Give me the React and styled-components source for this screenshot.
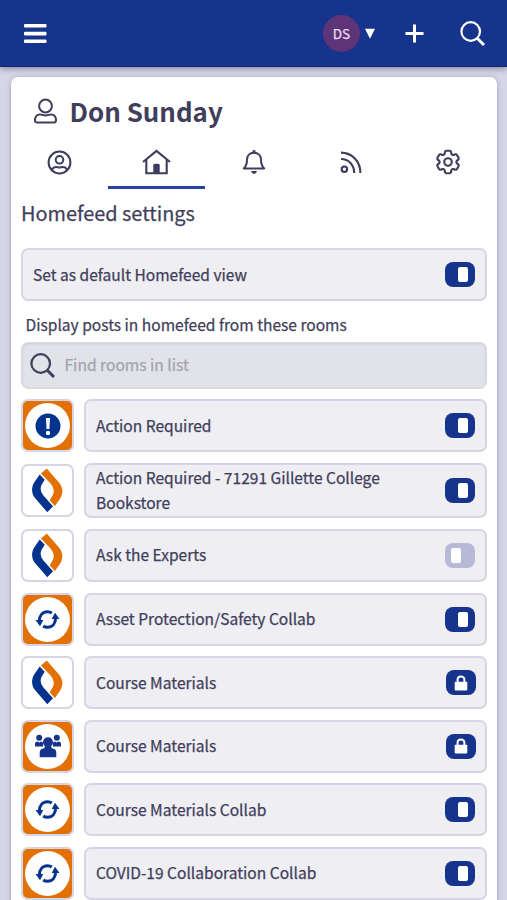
import React, { useState } from "react";
import styled, { createGlobalStyle } from "styled-components";
import { HiOutlineCog6Tooth } from "react-icons/hi2";

const GlobalStyle = createGlobalStyle`
    * {
        box-sizing: border-box;
    }
    body {
        margin: 0;
        background-color: #d5d6e6;
        color: #3f3f5b;
        font-family: "Noto Sans CJK JP", "Noto Sans CJK SC", "Open Sans", sans-serif;
        font-size: 15.55px;
        font-weight: 400;
        -webkit-text-stroke: 0.25px;
    }
`;

const Page = styled.div`
    height: 100vh;
    overflow: hidden;
    display: flex;
    flex-direction: column;
`;

const Header = styled.header`
    flex: none;
    height: 67px;
    padding: 1px 22px 0 24px;
    display: flex;
    align-items: center;
    justify-content: space-between;
    background-color: #17348d;
    border-bottom: 1px solid #14266b;
    box-shadow: 0 2px 6px rgba(50, 50, 90, 0.45);
    z-index: 1;
`;

const IconButton = styled.button`
    display: flex;
    padding: 0;
    border: none;
    background: none;
    color: #fff;
`;

const HeaderRight = styled.div`
    display: flex;
    align-items: center;
`;

const Account = styled(IconButton)`
    align-items: center;
    gap: 5px;
    margin-right: 30px;
`;

const AddButton = styled(IconButton)`
    margin-right: 36px;
`;

const Avatar = styled.span`
    width: 37px;
    height: 37px;
    border-radius: 50%;
    background-color: #5d3477;
    color: #f0dcf4;
    font: 400 13.6px/36px "Noto Sans CJK JP", sans-serif;
    text-align: center;
`;

const Card = styled.main`
    flex: none;
    width: 486px;
    min-height: 900px;
    margin: 10px 0 0 11px;
    background-color: #fff;
    border-radius: 7px;
    box-shadow: 0 1px 5px rgba(70, 70, 120, 0.4);
`;

const Title = styled.h1`
    display: flex;
    align-items: center;
    gap: 13px;
    height: 57px;
    margin: 0;
    padding: 10px 0 0 22.5px;
    font-size: 25.9px;
    font-weight: 700;
    line-height: 44px;
    -webkit-text-stroke: 0;
`;

const Tabs = styled.nav`
    display: grid;
    grid-template-columns: repeat(5, 1fr);
    height: 55px;
`;

const Tab = styled.button`
    display: flex;
    align-items: center;
    justify-content: center;
    padding: 4px 0 0;
    border: none;
    border-bottom: 3px solid ${(props) => (props.$active ? "#2644a0" : "transparent")};
    background: none;
    color: #3d3d5c;
`;

const Content = styled.section`
    padding: 0 10px;
`;

const Heading = styled.h2`
    margin: 0;
    padding-bottom: 11px;
    font-size: 19.9px;
    font-weight: 400;
    line-height: 48px;
`;

const Label = styled.p`
    margin: 0;
    padding: 8px 4.5px 2px;
    line-height: 31px;
`;

const Setting = styled.div`
    flex: 1;
    display: flex;
    align-items: center;
    justify-content: space-between;
    min-height: 53px;
    padding: 0 10.5px 0 10px;
    border: 2px solid #d5d5e6;
    border-radius: 7px;
    background-color: #eeeef3;
    line-height: 25.2px;
`;

const SearchBox = styled.label`
    display: flex;
    align-items: center;
    gap: 9.5px;
    height: 47px;
    padding: 0 8px;
    border: 1px solid #d9d9e4;
    border-radius: 7px;
    background-color: #e2e3e9;
    box-shadow: inset 0 1px 3px rgba(80, 80, 100, 0.15);
`;

const SearchInput = styled.input`
    flex: 1;
    padding: 0 0 3px;
    border: none;
    outline: none;
    background: none;
    font: inherit;
    font-size: 15.6px;
    &::placeholder {
        color: #a2a3ae;
        opacity: 1;
    }
`;

const RoomList = styled.ul`
    display: flex;
    flex-direction: column;
    gap: 10.6px;
    margin: 10.4px 0 0;
    padding: 0;
    list-style: none;
`;

const Room = styled.li`
    display: flex;
    align-items: center;
    gap: 10px;
`;

const RoomName = styled.span`
    max-width: 310px;
    padding-bottom: 1px;
`;

const Thumb = styled.div`
    flex: none;
    display: flex;
    align-items: center;
    justify-content: center;
    width: 53px;
    height: 53px;
    border: 2px solid #d5d5e6;
    border-radius: 7px;
    background-color: ${(props) => (props.$orange ? "#e37002" : "#fff")};
`;

const Disc = styled.div`
    display: flex;
    align-items: center;
    justify-content: center;
    width: 45px;
    height: 45px;
    border-radius: 50%;
    background-color: #fff;
`;

const Toggle = styled.button`
    flex: none;
    display: flex;
    align-items: center;
    justify-content: ${(props) => (props.$on ? "flex-end" : "flex-start")};
    width: 30px;
    height: 25px;
    padding: 0 6.5px 0 6px;
    border: none;
    border-radius: 8px;
    background-color: ${(props) => (props.$on ? "#17348d" : "#b8b8d7")};
    &::after {
        content: "";
        width: 10px;
        height: 15px;
        border-radius: 2px;
        background-color: #fff;
    }
`;

const Locked = styled.span`
    flex: none;
    display: flex;
    align-items: center;
    justify-content: center;
    width: 30px;
    height: 25px;
    margin-right: -1px;
    border-radius: 8px;
    background-color: #17348d;
`;

const GearIcon = styled(HiOutlineCog6Tooth)`
    flex: none;
    width: 30px;
    height: 30px;
    stroke-width: 1.7;
`;

const MenuIcon = () => (
    <svg width="23" height="21" viewBox="0 0 23 21" fill="#fff">
        <rect y="1" width="22.5" height="3.6" rx="1" />
        <rect y="8.8" width="22.5" height="3.6" rx="1" />
        <rect y="16.4" width="22.5" height="3.6" rx="1" />
    </svg>
);

const CaretIcon = () => (
    <svg width="10" height="11" viewBox="0 0 10 11">
        <path d="M0 0.8H10L5 10.8Z" fill="#fff" />
    </svg>
);

const PlusIcon = () => (
    <svg width="19" height="19" viewBox="0 0 19 19">
        <path d="M9.5 0.5V18.5M0.5 9.5H18.5" stroke="#fff" strokeWidth="3" />
    </svg>
);

const SearchIcon = () => (
    <svg width="25" height="25" viewBox="0 0 25 25" fill="none" stroke="currentColor">
        <circle cx="10.7" cy="10.5" r="9.3" strokeWidth="2.2" />
        <path d="M17.2 17.2L24 24" strokeWidth="3" />
    </svg>
);

const UserIcon = () => (
    <svg width="23" height="26" viewBox="0 0 23 26" fill="none" stroke="currentColor" strokeWidth="2">
        <circle cx="11.5" cy="8" r="6.4" />
        <path d="M5.8 16.4C8 16.4 9 17.4 11.5 17.4S15 16.4 17.2 16.4C20.3 16.4 22 19 22 22.2Q22 24.4 19.8 24.4H3.2Q1 24.4 1 22.2C1 19 2.7 16.4 5.8 16.4Z" />
    </svg>
);

const ProfileIcon = () => (
    <svg width="25" height="25" viewBox="0 0 25 25" fill="none" stroke="currentColor" strokeWidth="2">
        <circle cx="12.5" cy="12.5" r="10.9" />
        <circle cx="12.5" cy="9.8" r="3.8" />
        <path d="M4.8 19.8C6 17.6 7.5 16.9 9.2 16.9C10.7 16.9 11 17.5 12.5 17.5S14.3 16.9 15.8 16.9C17.5 16.9 19 17.6 20.2 19.8" />
    </svg>
);

const HomeIcon = () => (
    <svg width="29" height="26" viewBox="0 0 29 26" fill="none" stroke="currentColor" strokeWidth="2.1">
        <path d="M1 13L14.5 1.9L28 13" />
        <path d="M4.3 11V24.3H24.7V11" />
        <path d="M11.3 24.5V16.3Q11.3 14.8 12.8 14.8H16.2Q17.7 14.8 17.7 16.3V24.5Z" fill="currentColor" stroke="none" />
    </svg>
);

const BellIcon = () => (
    <svg width="24" height="26" viewBox="0 0 24 26" fill="none" stroke="currentColor" strokeWidth="2">
        <path d="M1.8 19.4C4 17.4 5 14.6 5 10.8C5 6.6 7.8 3.7 12 3.7S19 6.6 19 10.8C19 14.6 20 17.4 22.2 19.4Z" strokeLinejoin="round" />
        <path d="M12 1.2V4" strokeWidth="2.8" />
        <path d="M9 22.1Q9.6 24.9 12 24.9T15 22.1Z" fill="currentColor" stroke="none" />
    </svg>
);

const FeedIcon = () => (
    <svg width="22" height="24" viewBox="0 0 22 24" fill="none" stroke="currentColor" strokeWidth="2.1">
        <circle cx="4.4" cy="19.2" r="2.7" />
        <path d="M1 2.6C12 2.6 20.4 11.4 20.4 22.9" />
        <path d="M1 9C8.8 9 14.2 14.8 14.2 22.9" />
    </svg>
);

const LockIcon = () => (
    <svg width="14" height="16" viewBox="0 0 14 16">
        <path d="M3.6 7.5V4.6C3.6 0.4 10.4 0.4 10.4 4.6V7.5" fill="none" stroke="#fff" strokeWidth="2" />
        <rect x="0.7" y="6.8" width="12.6" height="8.6" rx="0.8" fill="#fff" />
    </svg>
);

// brand mark: two interlocking pages
const BrandMark = () => (
    <svg width="31" height="45" viewBox="0 0 31 45">
        <path d="M14.8 0.4L9 5.4L18.8 15.8Q23.4 21.4 21 26.6L17.7 32.4L22.9 38L28.2 30.4C31.2 25.6 31.2 20.2 27.4 15Z" fill="#e37002" />
        <path d="M7.7 6.4L12.7 11.8L9.6 16.8Q7 22 11.2 27.2L21 38.3L15.3 44.3L3 30C-0.8 25.2 -0.7 19.4 2.2 14.6Z" fill="#04338e" />
    </svg>
);

const AlertMark = () => (
    <svg width="26" height="26" viewBox="0 0 26 26">
        <circle cx="13" cy="13" r="12.5" fill="#04338e" />
        <path d="M10.9 5H15.1L14.4 16H11.6Z" fill="#fff" />
        <circle cx="13" cy="20" r="2.2" fill="#fff" />
    </svg>
);

const SyncMark = () => (
    <svg width="25" height="21" viewBox="0 0 25 21">
        <g fill="none" stroke="#04338e" strokeWidth="3">
            <path d="M4.4 12C4.4 6.2 7.8 2.7 12.5 2.7C14.2 2.7 15.6 3.1 16.8 4" />
            <path d="M20.6 9C20.6 14.8 17.2 18.3 12.5 18.3C10.8 18.3 9.4 17.9 8.2 17" />
        </g>
        <path d="M0.5 11H8.3L5 17.2ZM16.7 10H24.5L20 3.8Z" fill="#04338e" />
    </svg>
);

const GroupMark = () => (
    <svg width="28" height="24" viewBox="0 0 28 24" fill="#17348d">
        <circle cx="5.2" cy="3.8" r="3" />
        <path d="M1 12.5V10Q1 7.4 3.3 7.4L5.2 8.4L7.1 7.4Q9 7.6 9 9V12.5Z" />
        <circle cx="22.8" cy="3.8" r="3" />
        <path d="M27 12.5V10Q27 7.4 24.7 7.4L22.8 8.4L20.9 7.4Q19 7.6 19 9V12.5Z" />
        <circle cx="14" cy="8.2" r="5" />
        <path d="M5.7 23.3V19Q5.7 14.5 10.2 14.2L11 12H17L17.8 14.2Q22.3 14.5 22.3 19V23.3Z" />
    </svg>
);

const marks = {
    alert: AlertMark,
    sync: SyncMark,
    group: GroupMark,
};

const tabs = [
    { id: "profile", title: "Profile", Icon: ProfileIcon },
    { id: "home", title: "Homefeed", Icon: HomeIcon },
    { id: "notifications", title: "Notifications", Icon: BellIcon },
    { id: "feeds", title: "Feeds", Icon: FeedIcon },
    { id: "settings", title: "Settings", Icon: GearIcon },
];

const roomData = [
    { id: 1, name: "Action Required", mark: "alert", on: true },
    { id: 2, name: "Action Required - 71291 Gillette College Bookstore", mark: "brand", on: true },
    { id: 3, name: "Ask the Experts", mark: "brand", on: false },
    { id: 4, name: "Asset Protection/Safety Collab", mark: "sync", on: true },
    { id: 5, name: "Course Materials", mark: "brand", locked: true },
    { id: 6, name: "Course Materials", mark: "group", locked: true },
    { id: 7, name: "Course Materials Collab", mark: "sync", on: true },
    { id: 8, name: "COVID-19 Collaboration Collab", mark: "sync", on: true },
];

const RoomThumb = ({ mark }) => {
    const Mark = marks[mark];
    if (!Mark) {
        return <Thumb><BrandMark /></Thumb>;
    }
    return (
        <Thumb $orange>
            <Disc><Mark /></Disc>
        </Thumb>
    );
};

const App = () => {
    const [activeTab, setActiveTab] = useState("home");
    const [isDefault, setIsDefault] = useState(true);
    const [rooms, setRooms] = useState(roomData);
    const [query, setQuery] = useState("");

    const toggleRoom = (id) => {
        setRooms(rooms.map((room) => (room.id === id ? { ...room, on: !room.on } : room)));
    };

    const visible = rooms.filter((room) => room.name.toLowerCase().includes(query.toLowerCase()));

    return (
        <Page>
            <GlobalStyle />
            <Header>
                <IconButton aria-label="Menu"><MenuIcon /></IconButton>
                <HeaderRight>
                    <Account aria-label="Account">
                        <Avatar>DS</Avatar>
                        <CaretIcon />
                    </Account>
                    <AddButton aria-label="Add"><PlusIcon /></AddButton>
                    <IconButton aria-label="Search"><SearchIcon /></IconButton>
                </HeaderRight>
            </Header>
            <Card>
                <Title><UserIcon /> Don Sunday</Title>
                <Tabs>
                    {tabs.map(({ id, title, Icon }) => (
                        <Tab key={id} aria-label={title} $active={id === activeTab} onClick={() => setActiveTab(id)}>
                            <Icon />
                        </Tab>
                    ))}
                </Tabs>
                <Content>
                    <Heading>Homefeed settings</Heading>
                    <Setting>
                        <span>Set as default Homefeed view</span>
                        <Toggle aria-label="Default view" $on={isDefault} onClick={() => setIsDefault(!isDefault)} />
                    </Setting>
                    <Label>Display posts in homefeed from these rooms</Label>
                    <SearchBox>
                        <SearchIcon />
                        <SearchInput placeholder="Find rooms in list" value={query} onChange={(e) => setQuery(e.target.value)} />
                    </SearchBox>
                    <RoomList>
                        {visible.map((room) => (
                            <Room key={room.id}>
                                <RoomThumb mark={room.mark} />
                                <Setting>
                                    <RoomName>{room.name}</RoomName>
                                    {room.locked
                                        ? <Locked><LockIcon /></Locked>
                                        : <Toggle aria-label={room.name} $on={room.on} onClick={() => toggleRoom(room.id)} />}
                                </Setting>
                            </Room>
                        ))}
                    </RoomList>
                </Content>
            </Card>
        </Page>
    );
};

export default App;
